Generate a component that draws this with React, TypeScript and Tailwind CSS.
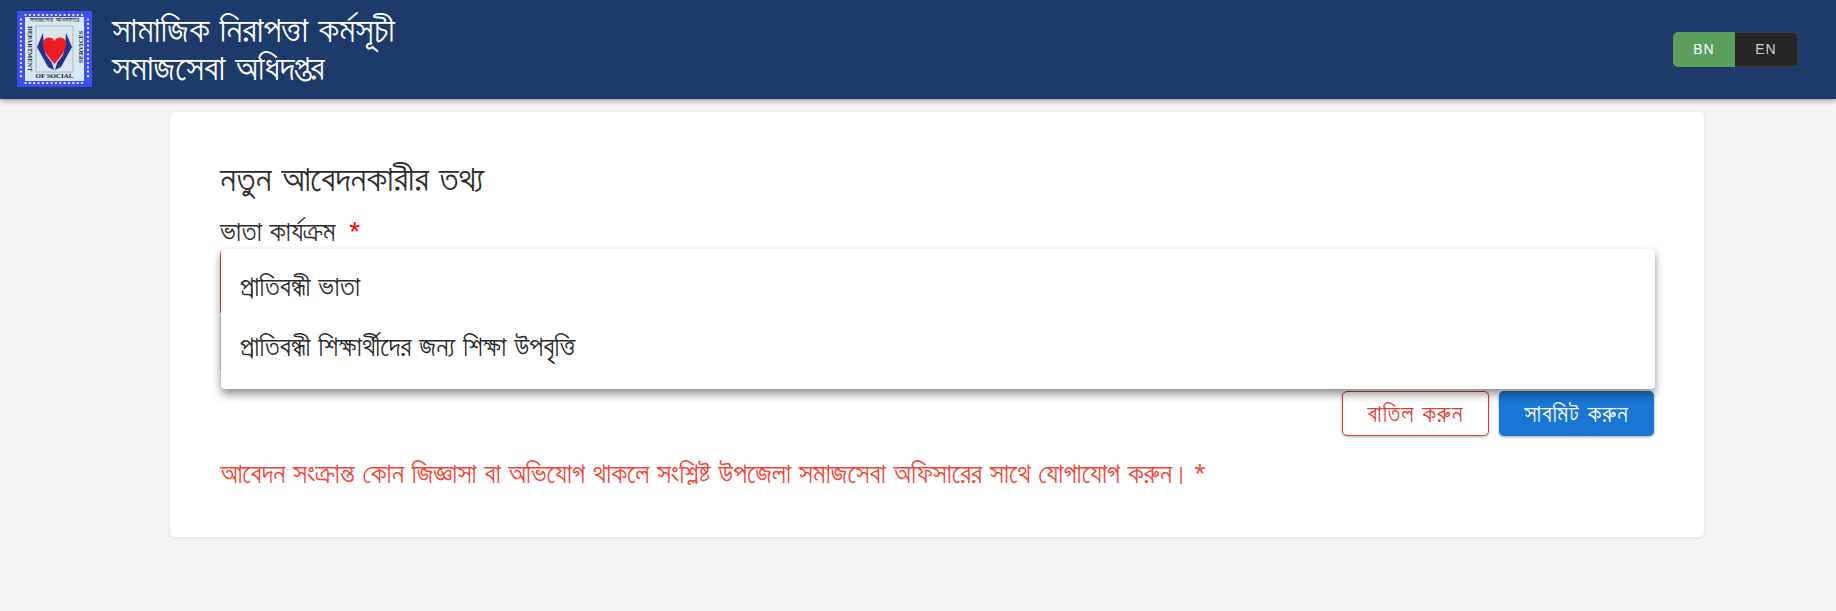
export default function App() {
  const dots: number[] = [];
  for (let i = 0; i < 14; i++) dots.push(3.5 + i * 4.35);
  return (
    <div className="min-h-[611px] bg-[#f4f4f4] font-['Liberation_Sans','FreeSans',sans-serif]">
      <header className="h-[99px] bg-[#1c3b6b] shadow-[0_2px_5px_rgba(0,0,0,0.35)] flex items-center justify-between pl-[17px] pr-[38px] relative">
        <div className="flex items-center gap-5">
          <svg width="75" height="76" viewBox="0 0 75 76" className="shrink-0 -mt-[1px]">
            <rect width="75" height="76" fill="#3f4ff2" />
            {dots.map((d) => (
              <g key={d} fill="#fff">
                <circle cx={d + 5} cy="4" r="1.1" />
                <circle cx={d + 5} cy="72" r="1.1" />
                <circle cx="4" cy={d + 5} r="1.1" />
                <circle cx="71" cy={d + 5} r="1.1" />
              </g>
            ))}
            <rect x="8" y="6" width="59" height="64" fill="#d6e8f2" />
            <rect x="19" y="15" width="37" height="46" fill="#d9e6ee" stroke="#8a9aa6" strokeWidth="0.6" />
            <text x="37.5" y="11" fontSize="7.5" textAnchor="middle" fill="#222">সমাজসেবা অধিদফতর</text>
            <text x="37.5" y="67" fontSize="7" fontWeight="700" textAnchor="middle" fill="#222" fontFamily="Liberation Serif, serif">OF SOCIAL</text>
            <text transform="translate(11 15) rotate(90)" fontSize="6.5" fontWeight="700" fill="#222" fontFamily="Liberation Serif, serif">DEPARTMENT</text>
            <text transform="translate(66 52) rotate(-90)" fontSize="6.5" fontWeight="700" fill="#222" fontFamily="Liberation Serif, serif">SERVICES</text>
            <path d="M26 22 L20 36 L31 56 L37 59 L35 52 L29 44 L27 36 Z" fill="#26308f" />
            <path d="M49 22 L55 36 L44 56 L38 59 L40 52 L46 44 L48 36 Z" fill="#26308f" />
            <path d="M37.5 53 C31 45 26 40 26 33 C26 25.5 35 24.5 37.5 30 C40 24.5 49 25.5 49 33 C49 40 44 45 37.5 53 Z" fill="#ee1c25" />
          </svg>
          <div className="text-white text-[36px] -mt-[2px]">
            <div className="h-[38px] leading-[38px]">সামাজিক নিরাপত্তা কর্মসূচী</div>
            <div className="h-[38px] leading-[38px]">সমাজসেবা অধিদপ্তর</div>
          </div>
        </div>
        <div className="flex h-[35px] text-[14px] tracking-[1px] font-medium -mt-[1px]">
          <div className="w-[62px] bg-[#5aa05c] text-white rounded-l-[5px] flex items-center justify-center">BN</div>
          <div className="w-[63px] bg-[#262626] text-[#cfcfcf] rounded-r-[5px] border border-l-0 border-[#3a3a3a] flex items-center justify-center">EN</div>
        </div>
      </header>

      <main className="w-[1534px] ml-[170px] mt-[13px] bg-white rounded-[5px] shadow-[0_1px_4px_rgba(0,0,0,0.08)] px-[50px] pt-[47px] pb-[47px]">
        <h1 className="text-[#2b2b2b] text-[36px] leading-[40px] font-normal">নতুন আবেদনকারীর তথ্য</h1>
        <div className="relative mt-[17px]">
          <label className="block text-[#2b2b2b] text-[28px] leading-[32px]">
            ভাতা কার্যক্রম <span className="text-[#ff0000] text-[28px] ml-[6px]">*</span>
          </label>
          <div className="h-[67px] mt-[1px] border border-[#e53935] rounded-[5px]" />
          <div className="h-[54px] border border-[#cfcfcf]" />
          <div className="absolute left-[1px] top-[33px] w-[1434px] h-[140px] bg-white rounded-[4px] shadow-[0_5px_10px_rgba(0,0,0,0.45)] text-[#2b2b2b] text-[28px] z-10 pt-[8px]">
            <div className="h-[60px] flex items-center px-[19px]">প্রাতিবন্ধী ভাতা</div>
            <div className="h-[60px] flex items-center px-[19px]">প্রাতিবন্ধী শিক্ষার্থীদের জন্য শিক্ষা উপবৃত্তি</div>
          </div>
        </div>
        <div className="flex justify-end gap-[10px] mt-[21px]">
          <button className="w-[147px] h-[45px] border border-[#e53935] rounded-[5px] text-[#e53935] text-[24px] tracking-[1px] bg-white shadow-[0_1px_3px_rgba(0,0,0,0.3)]">বাতিল করুন</button>
          <button className="w-[155px] h-[45px] rounded-[5px] text-white text-[24px] tracking-[1px] bg-[#1976d2] shadow-[0_1px_3px_rgba(0,0,0,0.4)]">সাবমিট করুন</button>
        </div>
        <p className="text-[#f44336] text-[27.7px] leading-[32px] mt-[22px]">
          আবেদন সংক্রান্ত কোন জিজ্ঞাসা বা অভিযোগ থাকলে সংশ্লিষ্ট উপজেলা সমাজসেবা অফিসারের সাথে যোগাযোগ করুন।<span className="text-[28px] ml-[4px]">*</span>
        </p>
      </main>
    </div>
  );
}
